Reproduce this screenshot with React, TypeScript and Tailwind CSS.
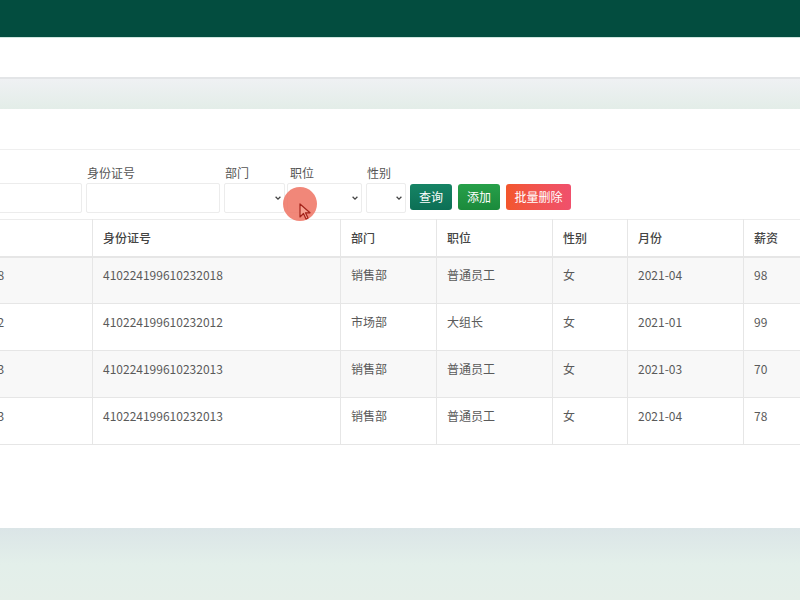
import React from 'react'

interface Row {
  no: string
  idCard: string
  dept: string
  position: string
  gender: string
  month: string
  salary: string
}

const rows: Row[] = [
  { no: '13838384388', idCard: '410224199610232018', dept: '销售部', position: '普通员工', gender: '女', month: '2021-04', salary: '98' },
  { no: '13838384382', idCard: '410224199610232012', dept: '市场部', position: '大组长', gender: '女', month: '2021-01', salary: '99' },
  { no: '13838384383', idCard: '410224199610232013', dept: '销售部', position: '普通员工', gender: '女', month: '2021-03', salary: '70' },
  { no: '13838384383', idCard: '410224199610232013', dept: '销售部', position: '普通员工', gender: '女', month: '2021-04', salary: '78' },
]

const Chevron = () => (
  <svg width="8" height="8" viewBox="0 0 10 10" className="text-[#444]">
    <path d="M2 3.5 L5 6.5 L8 3.5" fill="none" stroke="currentColor" strokeWidth="1.6" />
  </svg>
)

function SelectBox({ label, width }: { label: string; width: string }) {
  return (
    <div className="flex flex-col">
      <span className="h-[20px] pl-[1px] text-[12px] leading-[20px] text-[#555]">{label}</span>
      <div className={`${width} flex h-[30px] items-center justify-end rounded-[2px] border border-[#ececec] bg-white pr-[2px]`}>
        <Chevron />
      </div>
    </div>
  )
}

export default function App() {
  return (
    <div
      className="relative h-[600px] w-[800px] overflow-hidden bg-white"
      style={{ fontFamily: '"Noto Sans CJK SC", "Noto Sans", sans-serif' }}
    >
      {/* top bar */}
      <div className="h-[37px] bg-[#034d3f]" />
      <div className="h-[1px] bg-[#cfe6df]" />
      <div className="h-[41px] border-b-2 border-[#e3e5e7] bg-white" />
      <div className="h-[30px] bg-gradient-to-b from-[#eff1f3] to-[#e3ede8]" />

      {/* card */}
      <div className="h-[419px] bg-white">
        <div className="h-[41px] border-b border-[#efefef]" />

        {/* filter form */}
        <div className="ml-[-68px] mt-[13px] flex items-end gap-[4px]">
          <div className="flex flex-col">
            <span className="h-[20px] text-[12px] leading-[20px] text-[#555]">姓名</span>
            <div className="h-[30px] w-[150px] rounded-[2px] border border-[#ececec]" />
          </div>
          <div className="flex flex-col">
            <span className="h-[20px] pl-[1px] text-[12px] leading-[20px] text-[#555]">身份证号</span>
            <div className="h-[30px] w-[134px] rounded-[2px] border border-[#ececec]" />
          </div>
          <SelectBox label="部门" width="w-[61px]" />
          <div className="flex flex-col">
            <span className="h-[20px] pl-[1px] text-[12px] leading-[20px] text-[#555]">职位</span>
            <div className="ml-[-2px] flex h-[30px] w-[75px] items-center justify-end rounded-[2px] border border-[#ececec] bg-white pr-[2px]">
              <Chevron />
            </div>
          </div>
          <SelectBox label="性别" width="w-[40px]" />
          <div className="mb-[3px] flex gap-[6px]">
            <button className="h-[26px] w-[42px] rounded-[3px] bg-gradient-to-b from-[#168465] to-[#0c6f55] text-[12px] text-white">
              查询
            </button>
            <button className="h-[26px] w-[42px] rounded-[3px] bg-gradient-to-b from-[#27a04a] to-[#1b8a3b] text-[12px] text-white">
              添加
            </button>
            <button className="h-[26px] w-[65px] rounded-[3px] bg-gradient-to-r from-[#f3562b] to-[#f0506c] text-[12px] text-white">
              批量删除
            </button>
          </div>
        </div>

        {/* table */}
        <table className="ml-[-80px] mt-[6px] w-[943px] table-fixed border-collapse text-left text-[12px] text-[#5a5a5a]">
          <colgroup>
            <col className="w-[172px]" />
            <col className="w-[248px]" />
            <col className="w-[96px]" />
            <col className="w-[116px]" />
            <col className="w-[75px]" />
            <col className="w-[116px]" />
            <col className="w-[120px]" />
          </colgroup>
          <thead>
            <tr className="h-[37px] border-y border-b-2 border-[#e6e6e6] border-t-[#ececec]">
              {['工号', '身份证号', '部门', '职位', '性别', '月份', '薪资'].map((h) => (
                <th key={h} className="border-x border-[#e6e6e6] px-[10px] text-[12px] font-medium text-[#444]">
                  {h}
                </th>
              ))}
            </tr>
          </thead>
          <tbody>
            {rows.map((r, i) => (
              <tr key={i} className={`h-[47px] border-b border-[#e6e6e6] ${i % 2 === 0 ? 'bg-[#f8f8f8]' : 'bg-white'}`}>
                {[r.no, r.idCard, r.dept, r.position, r.gender, r.month, r.salary].map((c, j) => (
                  <td key={j} className="border-x border-[#e6e6e6] px-[10px] pb-[10px] align-middle">
                    {c}
                  </td>
                ))}
              </tr>
            ))}
          </tbody>
        </table>
      </div>

      {/* bottom background */}
      <div className="h-[72px] bg-gradient-to-b from-[#dbe5e7] via-[#e3efea] to-[#e5efe9]" />

      {/* cursor highlight overlay */}
      <div className="absolute left-[283px] top-[187px] h-[34px] w-[34px] rounded-full bg-[#f07a6a]/90" />
      <svg className="absolute left-[299px] top-[203px]" width="14" height="18" viewBox="0 0 14 18">
        <path d="M1 1 L1 14 L4.5 10.5 L7 16 L9 15 L6.5 9.8 L11 9.8 Z" fill="#f6a090" stroke="#a3231a" strokeWidth="1.2" strokeLinejoin="round" />
      </svg>
    </div>
  )
}
